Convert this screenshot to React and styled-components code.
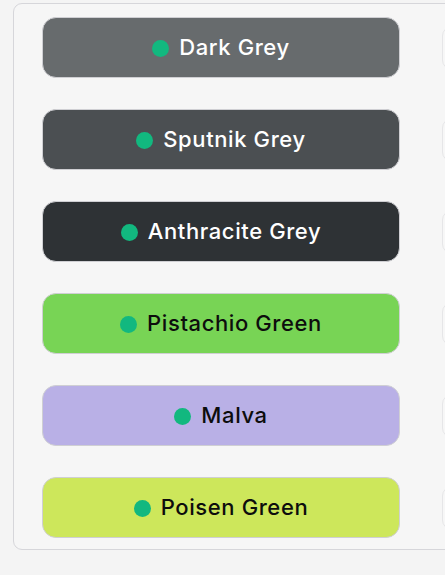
import React from 'react';
import styled, { createGlobalStyle } from 'styled-components';

const GlobalStyle = createGlobalStyle`
  html, body {
    margin: 0;
    padding: 0;
    background: #f4f4f4;
    overflow: hidden;
  }
  body {
    font-family: Inter, "Liberation Sans", sans-serif;
  }
`;

const Page = styled.div`
  padding: 3px 0 0 13px;
`;

const Panel = styled.div`
  width: 900px;
  box-sizing: border-box;
  background: #f6f6f6;
  border: 1px solid #d6d6da;
  border-radius: 9px;
  padding: 13px 28px 11px;
  display: grid;
  grid-template-columns: 358px 358px;
  column-gap: 42px;
`;

const Column = styled.div`
  display: flex;
  flex-direction: column;
  gap: 31px;
`;

const ColorButton = styled.button`
  height: 61px;
  box-sizing: border-box;
  border: 1px solid #cfcfd3;
  border-radius: 14px;
  background: ${(p) => p.$bg};
  color: ${(p) => (p.$light ? '#0d0d0d' : '#ffffff')};
  display: flex;
  align-items: center;
  justify-content: center;
  gap: 10px;
  font-family: Inter, "Liberation Sans", sans-serif;
  font-size: 22px;
  font-weight: 500;
  letter-spacing: 0.6px;
  padding: 0;
  cursor: pointer;
`;

const Dot = styled.span`
  width: 17px;
  height: 17px;
  border-radius: 50%;
  background: #12b87f;
  flex-shrink: 0;
  margin-top: 1px;
`;

const Label = styled.span`
  line-height: 1;
  margin-top: -2px;
`;

const GhostSlot = styled.div`
  height: 61px;
  display: flex;
  align-items: center;
`;

const GhostButton = styled.div`
  width: 100%;
  height: 44px;
  box-sizing: border-box;
  border: 1px solid #e6e6e8;
  border-radius: 10px;
  background: #f7f7f7;
`;

const colors = [
  { name: 'Dark Grey', bg: '#676b6d' },
  { name: 'Sputnik Grey', bg: '#4b4f52' },
  { name: 'Anthracite Grey', bg: '#2e3235' },
  { name: 'Pistachio Green', bg: '#78d455', light: true },
  { name: 'Malva', bg: '#b9b0e6', light: true },
  { name: 'Poisen Green', bg: '#cde75b', light: true },
];

export default function App() {
  return (
    <>
      <GlobalStyle />
      <Page>
        <Panel>
          <Column>
            {colors.map((c) => (
              <ColorButton key={c.name} $bg={c.bg} $light={c.light}>
                <Dot />
                <Label>{c.name}</Label>
              </ColorButton>
            ))}
          </Column>
          <Column>
            {colors.map((c) => (
              <GhostSlot key={c.name}>
                <GhostButton />
              </GhostSlot>
            ))}
          </Column>
        </Panel>
      </Page>
    </>
  );
}
